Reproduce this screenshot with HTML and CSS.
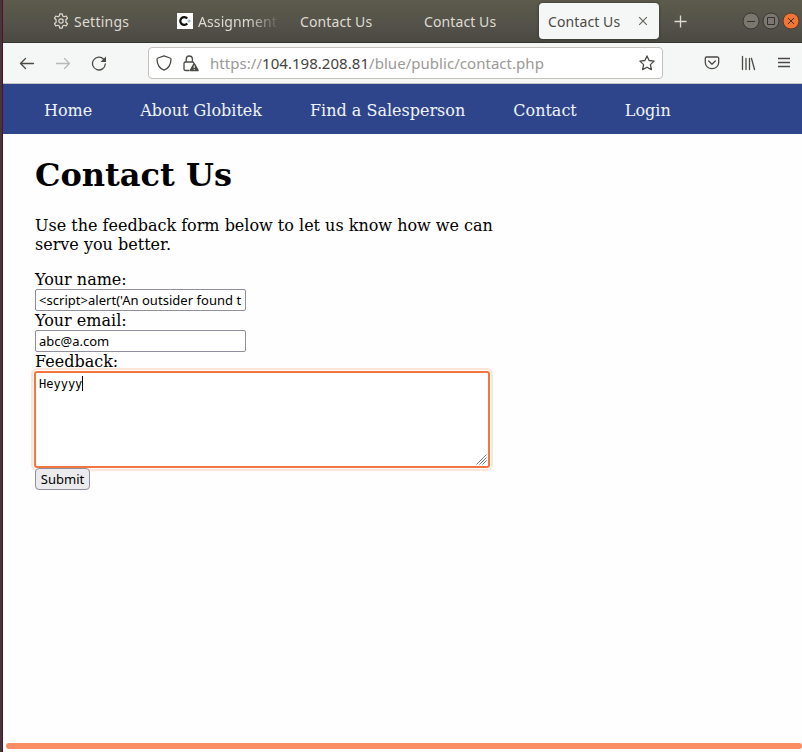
FILE: index.html
```html
<!DOCTYPE html>
<html lang="en">
<head>
<meta charset="utf-8">
<title>Contact Us</title>
<link rel="stylesheet" href="styles.css">
</head>
<body>
<div class="window">
  <header class="tabs">
    <div class="tab tab-settings">
      <svg class="gear" width="16" height="16" viewBox="0 0 16 16"><path d="M6.3 2.9 6.8.8h2.4l.5 2.1 1.4.8 2.1-.7 1.3 2.2-1.6 1.5v2.6l1.6 1.5-1.3 2.2-2.1-.7-1.4.8-.5 2.1H6.8l-.5-2.1-1.4-.8-2.1.7-1.3-2.2 1.6-1.5V6.7L1.5 5.2 2.8 3l2.1.7z"/><circle cx="8" cy="8" r="2.2"/></svg>
      <span>Settings</span>
    </div>
    <div class="tab tab-assignment">
      <svg class="favicon" width="16" height="16" viewBox="0 0 16 16"><path fill="#fff" d="M0 0h16v16H0z"/><path d="M10.200 5.500A3.900 3.900 0 1 0 10.200 10.500" fill="none" stroke="#111" stroke-width="2.200"/><path d="M10.500 8h3M12 6.500v3" stroke="#9dbccd" stroke-width="1.500"/></svg>
      <span class="t-assignment">Assignment:</span>
    </div>
    <div class="tab tab-third"><span>Contact Us</span></div>
    <div class="tab tab-fourth"><span>Contact Us</span></div>
    <div class="tab active"><span>Contact Us</span>
      <svg width="10" height="10" viewBox="0 0 10 10"><path d="m1.2 1.2 7.6 7.6m0-7.6L1.2 8.8"/></svg>
    </div>
    <svg class="plus" width="13" height="13" viewBox="0 0 13 13"><path d="M6.5.5v12M.5 6.500h12"/></svg>
    <div class="controls">
      <svg width="18" height="18" viewBox="0 0 18 18"><circle cx="9" cy="9" r="8"/><path d="M5 9.500h8"/></svg>
      <svg width="18" height="18" viewBox="0 0 18 18"><circle cx="9" cy="9" r="8"/><path d="M5.500 5.500h7v7h-7z"/></svg>
      <svg class="close" width="18" height="18" viewBox="0 0 18 18"><circle cx="9" cy="9" r="8"/><path d="m6 6 6 6m0-6-6 6"/></svg>
    </div>
  </header>
  <div class="toolbar">
    <svg class="icon back" width="16" height="16" viewBox="0 0 16 16"><path d="M14.500 8.500H1.500M6.500 3.500 1.500 8.500l5 5"/></svg>
    <svg class="icon forward" width="16" height="16" viewBox="0 0 16 16"><path d="M1.500 8.500h13M9.500 3.500l5 5-5 5"/></svg>
    <svg class="icon reload" width="16" height="16" viewBox="0 0 16 16"><path d="M14.300 9A6.400 6.400 0 1 1 12.700 4.300"/><path class="solid" d="M15 1.500V7H9.500z"/></svg>
    <div class="address">
      <svg class="icon shield" width="16" height="16" viewBox="0 0 16 16"><path d="M8 .9 14 3c.9.3 1 .8 1 1.400C14.800 9.500 12.500 13.500 8 15.200 3.500 13.500 1.200 9.500 1 4.400c0-.6.1-1.100 1-1.400z"/></svg>
      <svg class="icon lock" width="16" height="17" viewBox="0 0 16 17"><path d="M3.200 7V4.300a3.100 3.300 0 0 1 6.200 0V7M6 15.500H2.500A1.500 1.500 0 0 1 1 14V8.500A1.500 1.500 0 0 1 2.500 7h7a1.500 1.500 0 0 1 1.300 1"/><path class="warning" d="M11.200 8Q11.800 8 12.200 8.700L15.700 15Q16 16.200 15 16.200H7.400Q6.300 16.200 6.700 15L10.200 8.700Q10.600 8 11.200 8z"/><path class="mark" d="M11.200 10.500v2.600m0 1v1"/></svg>
      <span class="url">https://<b>104.198.208.81</b>/blue/public/contact.php</span>
      <svg class="icon star" width="16" height="16" viewBox="0 0 16 16"><path d="m8 .9 2.100 4.600 5 .6-3.700 3.500 1 5L8 12.200l-4.400 2.400 1-5L.9 6.100l5-.6z"/></svg>
    </div>
    <svg class="icon pocket" width="16" height="16" viewBox="0 0 16 16"><path d="M2.500 2h11A1.200 1.200 0 0 1 14.700 3.200v4.200a6.700 6.300 0 0 1-13.400 0V3.200A1.200 1.200 0 0 1 2.500 2zM4.700 6 8 9.200 11.300 6"/></svg>
    <svg class="icon library" width="16" height="16" viewBox="0 0 16 16"><path d="M2.500 1.500v13M6 3.500v11M9.500 3.500v11M11.500 3.500l3 11"/></svg>
    <svg class="icon menu" width="16" height="16" viewBox="0 0 16 16"><path d="M2 3.500h12M2 7.500h12M2 11.500h12"/></svg>
  </div>
  <nav>
    <a>Home</a><a>About Globitek</a><a>Find a Salesperson</a><a>Contact</a><a>Login</a>
  </nav>
  <main>
    <h1>Contact Us</h1>
    <p>Use the feedback form below to let us know how we can<br>serve you better.</p>
    <form>
      <div class="label">Your name:</div>
      <div class="field"><span class="t-script">&lt;script&gt;alert('An outsider found th</span></div>
      <div class="label">Your email:</div>
      <div class="field"><span>abc@a.com</span></div>
      <div class="label">Feedback:</div>
      <div class="feedback"><span>Heyyyy</span><i class="caret"></i>
        <svg class="grip" width="11" height="11" viewBox="0 0 11 11"><path d="M.5 10.500l10-10M3.500 10.500l7-7M6.500 10.500l4-4"/></svg>
      </div>
      <button type="button"><span>Submit</span></button>
    </form>
  </main>
  <div class="scrollbar"></div>
</div>
</body>
</html>
```
FILE: styles.css
```css
* { box-sizing: border-box; }
html, body { margin: 0; height: 100%; overflow: hidden; }
body { background: #fff; }
svg { display: block; flex: none; fill: none; }
.window {
  height: 752px;
  display: flex;
  flex-direction: column;
  border-left: 1px solid #5b0b2e;
  margin-left: 2px;
  box-shadow: -2px 0 #45363a;
  background: #fefefe;
}
.tabs {
  height: 43px;
  flex: none;
  display: flex;
  align-items: center;
  background: linear-gradient(#5d5b4c, #56554a 40%, #53504a 65%, #494a41);
  border-bottom: 1px solid #35352f;
  font: 14px/20px "Noto Sans", sans-serif;
  color: #dfdbd2;
  white-space: nowrap;
}
.tab { display: flex; align-items: center; flex: none; letter-spacing: .1px; }
.tab span { padding-top: 1px; }
.tab-settings { width: 124px; padding-left: 50px; gap: 5px; letter-spacing: .25px; }
.gear { stroke: #dfdbd2; stroke-width: 1.2; stroke-linejoin: round; }
.tab-assignment { width: 101px; margin-left: 50px; gap: 5px; overflow: hidden; }
.t-assignment { -webkit-mask-image: linear-gradient(90deg, #000 60%, transparent 99%); mask-image: linear-gradient(90deg, #000 60%, transparent 99%); }
.tab-third { width: 124px; margin-left: 22px; }
.tab-fourth { width: 115px; }
.active {
  width: 120px;
  height: 36px;
  padding: 0 11px 0 9px;
  justify-content: space-between;
  background: #f5f7f7;
  color: #4b4a43;
  border-radius: 4px;
  box-shadow: 0 0 3px #2e2e29;
}
.active svg { stroke: #605f58; stroke-width: 1.1; }
.plus { margin-left: 15px; stroke: #dfdbd2; stroke-width: 1.3; }
.controls { display: flex; gap: 2px; margin-left: 55px; }
.controls svg { fill: #7b776f; stroke: #393832; }
.controls path { fill: none; stroke: #33332e; }
.controls .close { fill: #f07535; stroke: #59372a; }
.toolbar {
  height: 41px;
  flex: none;
  display: flex;
  align-items: center;
  padding-left: 16px;
  background: #f5f7f7;
  border-bottom: 1px solid #c5c5c3;
}
.icon { stroke: #4b4a45; stroke-width: 1.3; stroke-linecap: round; stroke-linejoin: round; }
.forward { margin-left: 20px; stroke: #b9b8b4; }
.reload { margin-left: 20px; }
.solid, .warning { fill: #4b4a45; stroke: none; }
.mark { stroke: #fff; stroke-width: 1; stroke-linecap: butt; }
.address {
  width: 515px;
  height: 32px;
  margin-left: 41px;
  padding: 0 7px;
  display: flex;
  align-items: center;
  background: #fff;
  border: 1px solid #c5c2bb;
  border-radius: 4px;
}
.lock { margin-left: 11px; }
.url { flex: 1; margin-left: 11px; color: #9a9995; font: 15px/20px "Noto Sans", sans-serif; letter-spacing: .04px; white-space: nowrap; }
.url b { font-weight: 400; color: #44433e; }
.pocket { margin-left: 41px; }
.library { margin-left: 20px; }
.menu { margin-left: 20px; stroke-linecap: butt; }
nav {
  height: 50px;
  flex: none;
  display: flex;
  align-items: center;
  gap: 48px;
  padding: 2px 0 0 41px;
  background: #2e458b;
  color: #f0f4f8;
  font: 16px/19px "DejaVu Serif", serif;
}
main { flex: 1; padding: 22px 0 0 32px; font: 16px/19px "DejaVu Serif", serif; color: #000; }
h1 { margin: 0; font-size: 32px; line-height: 38px; }
p { margin: 22px 0 16px; }
.label { height: 19px; }
.field {
  width: 211px;
  height: 22px;
  padding: 0 3px;
  border: 1px solid #8f8f9d;
  border-radius: 2px;
  background: #fff;
  font: 13px/20px "Noto Sans", sans-serif;
  white-space: nowrap;
}
.field span { display: block; overflow: hidden; }
.field .t-script { letter-spacing: .03px; }
.feedback {
  position: relative;
  width: 456px;
  height: 97px;
  margin-left: -1px;
  display: flex;
  padding: 3px;
  border: 2px solid #f37642;
  border-radius: 3px;
  box-shadow: 0 0 0 1px #fff, 0 0 0 3px #fde5d8;
  background: #fff;
  font: 12px/16px "DejaVu Sans Mono", monospace;
}
.caret { width: 1px; height: 15px; background: #000; }
.grip { position: absolute; right: 1px; bottom: 1px; stroke: #777; }
button {
  position: relative;
  display: block;
  width: 55px;
  height: 22px;
  padding: 0;
  border: 1px solid #8f8f9d;
  border-radius: 4px;
  background: #ebebed;
  color: #000;
  font: 13px/19px "Noto Sans", sans-serif;
}
.scrollbar { height: 6px; flex: none; margin: 0 0 3px 3px; border-radius: 3px; background: #fa8d63; }
```
